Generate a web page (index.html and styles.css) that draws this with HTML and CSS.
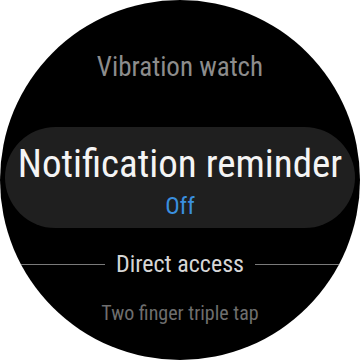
FILE: index.html
```html
<html>
<head><title>Vibration watch</title>
<link rel="stylesheet" href="styles.css">
</head>
<body>
<div class="watch">
  <div class="title">Vibration watch</div>
  <div class="item">
    <div class="item-name">Notification reminder</div>
    <div class="item-value">Off</div>
  </div>
  <div class="section">
    <span class="rule"></span>
    <span class="section-name">Direct access</span>
    <span class="rule"></span>
  </div>
  <div class="hint">Two finger triple tap</div>
</div>
</body>
</html>
```
FILE: styles.css
```css
body {
margin: 0;
padding: 0;
background: #ffffff;
font-family: "Roboto Condensed", Roboto, sans-serif;
}

.watch {
width: 360px;
height: 360px;
border-radius: 50%;
background: #000000;
overflow: hidden;
display: flex;
flex-direction: column;
align-items: center;
white-space: nowrap;
}

.title {
margin-top: 51px;
font-size: 27px;
color: #8c8c8c;
line-height: 32px;
}

.item {
margin-top: 44px;
width: 350px;
height: 101px;
border-radius: 51px;
background: #1f1f1f;
display: flex;
flex-direction: column;
align-items: center;
}

.item-name {
margin-top: 14px;
font-size: 39px;
line-height: 46px;
color: #f4f4f4;
}

.item-value {
margin-top: 5px;
font-size: 24px;
line-height: 28px;
color: #3a8fdf;
}

.section {
margin-top: 21px;
width: 320px;
display: flex;
align-items: center;
gap: 11px;
}

.rule {
flex: 1;
height: 1px;
background: #7a7a7a;
}

.section-name {
font-size: 24px;
line-height: 30px;
color: #d6d6d6;
}

.hint {
margin-top: 22px;
font-size: 20px;
line-height: 24px;
color: #6e6e6e;
}
```
